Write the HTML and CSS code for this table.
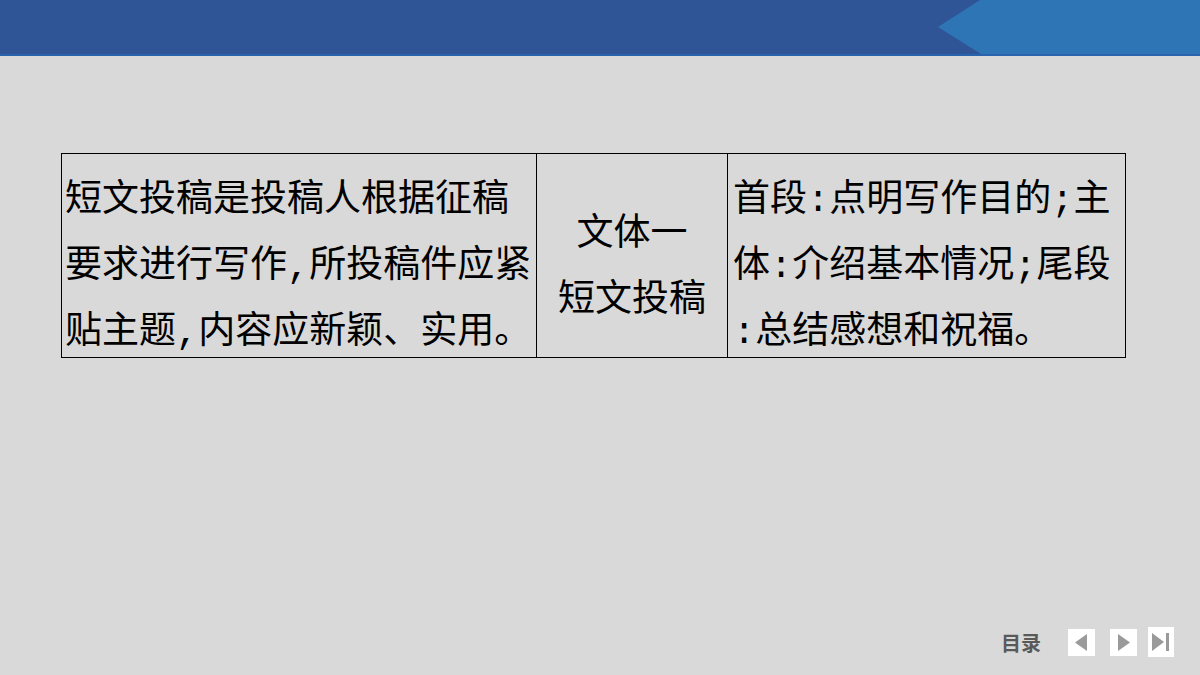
FILE: index.html
```
<!DOCTYPE html>
<html lang="zh-CN">
<head>
    <meta charset="UTF-8">
    <title>文体一 短文投稿</title>
    <link rel="stylesheet" href="styles.css">
</head>
<body>
<div class="slide">
    <div class="topbar">
        <div class="topbar-tab"></div>
    </div>
    <div class="content">
        <table class="sheet">
            <tr>
                <td class="col-desc"><div class="cell-text">短文投稿是投稿人根据征稿<br>要求进行写作,所投稿件应紧<br>贴主题,内容应新颖、实用。</div></td>
                <td class="col-title">文体一<br>短文投稿</td>
                <td class="col-plan"><div class="cell-text">首段:点明写作目的;主<br>体:介绍基本情况;尾段<br>:总结感想和祝福。</div></td>
            </tr>
        </table>
    </div>
    <div class="nav">
        <span class="nav-menu">目录</span>
        <span class="nav-btn">
            <svg width="27" height="27" viewBox="0 0 27 27"><polygon points="19,5 19,22 7,13.5" fill="#9a9a9a"/></svg>
        </span>
        <span class="nav-btn">
            <svg width="27" height="27" viewBox="0 0 27 27"><polygon points="8,5 8,22 20,13.5" fill="#9a9a9a"/></svg>
        </span>
        <span class="nav-btn nav-btn-last">
            <svg width="26" height="30" viewBox="0 0 26 30"><polygon points="4,6 4,24 16,15" fill="#9a9a9a"/><rect x="18" y="6" width="3" height="18" fill="#9a9a9a"/></svg>
        </span>
    </div>
</div>
</body>
</html>
```

FILE: styles.css
```
body {
    margin: 0;
    background-color: #d9d9d9;
}
.slide {
    width: 1200px;
    height: 675px;
    display: flex;
    flex-direction: column;
    background-color: #d9d9d9;
}
.topbar {
    height: 54px;
    background-color: #2f5597;
    border-bottom: 2px solid #2a63ad;
    display: flex;
    justify-content: flex-end;
}
.topbar-tab {
    width: 262px;
    height: 54px;
    background-color: #2e75b6;
    clip-path: polygon(42px 0, 100% 0, 100% 100%, 43px 100%, 0 50%);
}
.content {
    padding: 97px 0 0 61px;
}
.sheet {
    border-collapse: collapse;
    width: 1065px;
    font-family: "Liberation Mono", "Noto Sans CJK SC", sans-serif;
    font-size: 37px;
    line-height: 66px;
    color: #000;
}
.sheet td {
    border: 1px solid #000;
    padding: 0 4px;
    vertical-align: top;
    white-space: nowrap;
}
.cell-text {
    height: 189px;
    padding-top: 14px;
}
.col-desc {
    width: 467px;
    padding-left: 3px !important;
}
.col-title {
    width: 182px;
    text-align: center;
    vertical-align: middle !important;
    padding-top: 24px !important;
}
.col-plan {
    padding-left: 5px !important;
}
.nav {
    margin-top: auto;
    display: flex;
    align-items: center;
    justify-content: flex-end;
    padding: 0 26px 18px 0;
    gap: 15px;
}
.nav-menu {
    font-family: "Noto Sans CJK SC", sans-serif;
    font-weight: bold;
    font-size: 20px;
    color: #595959;
    margin-right: 12px;
}
.nav-btn {
    width: 27px;
    height: 27px;
    background-color: #fff;
    display: flex;
    align-items: center;
    justify-content: center;
}
.nav-btn-last {
    width: 26px;
    height: 30px;
    margin-left: -4px;
}
```
